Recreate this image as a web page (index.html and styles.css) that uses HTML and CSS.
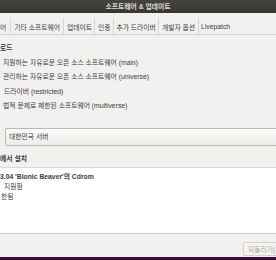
FILE: index.html
```html
<!DOCTYPE html>
<html lang="ko">
<head>
<meta charset="utf-8">
<title>소프트웨어 &amp; 업데이트</title>
<link rel="stylesheet" href="styles.css">
</head>
<body>
<div class="window">
  <header class="titlebar">소프트웨어 &amp; 업데이트</header>
  <nav class="tabs">
    <span class="tab active">어</span>
    <span class="tab">기타 소프트웨어</span>
    <span class="tab">업데이트</span>
    <span class="tab">인증</span>
    <span class="tab">추가 드라이버</span>
    <span class="tab">개발자 옵션</span>
    <span class="tab">Livepatch</span>
  </nav>
  <main class="content">
    <h2 class="section">로드</h2>
    <ul class="sources">
      <li>지원하는 자유로운 오픈 소스 소프트웨어 (main)</li>
      <li>관리하는 자유로운 오픈 소스 소프트웨어 (universe)</li>
      <li class="tight">드라이버 (restricted)</li>
      <li>법적 문제로 제한된 소프트웨어 (multiverse)</li>
    </ul>
    <div class="server-row">
      <div class="combo">대한민국 서버</div>
    </div>
    <h2 class="section cd-title">에서 설치</h2>
  </main>
  <section class="cdlist">
    <div class="cd-name">3.04 'Bionic Beaver'의 Cdrom</div>
    <div class="cd-item">지원함</div>
    <div class="cd-item flush">한됨</div>
  </section>
  <footer class="actions">
    <button class="btn" disabled>되돌리기(</button>
  </footer>
  <div class="desktop"></div>
</div>
</body>
</html>
```

FILE: styles.css
```css
* { box-sizing: border-box; margin: 0; padding: 0; }

html, body {
  width: 276px;
  height: 260px;
  overflow: hidden;
}

body {
  background: #f2f1f0;
  font-family: "Liberation Sans", "Noto Sans CJK KR", sans-serif;
  font-size: 6.8px;
  color: #3c3c3c;
}

.window {
  display: flex;
  flex-direction: column;
  height: 260px;
}

.titlebar {
  height: 13px;
  background: linear-gradient(#45443f, #37362f);
  color: #dfdbd2;
  font-weight: bold;
  font-size: 6.8px;
  line-height: 13px;
  text-align: center;
}

.tabs {
  display: flex;
  align-items: stretch;
  height: 22px;
  padding-top: 5px;
  border-bottom: 1px solid #d6d3ce;
}

.tab {
  display: flex;
  align-items: center;
  padding: 1px 2.5px 0;
  border-right: 1px solid #dad7d2;
  height: 16px;
  white-space: nowrap;
}

.tab.active {
  padding-left: 0;
  padding-right: 4px;
}

.tab:nth-child(2) { padding-left: 3px; padding-right: 3.5px; }

.tab:last-child { border-right: none; }

.content {
  padding-top: 8px;
}

.section {
  font-size: 6.8px;
  font-weight: bold;
  line-height: 10px;
  height: 10px;
}

.sources {
  list-style: none;
  padding-top: 3px;
}

.sources li {
  height: 14.4px;
  line-height: 14.4px;
  padding-left: 3px;
  white-space: nowrap;
}

.sources li.tight { padding-left: 4px; }

.server-row {
  padding: 14px 0 0 5px;
}

.combo {
  height: 18px;
  line-height: 16px;
  padding-left: 3px;
  border: 1px solid #bcb9b3;
  border-right: none;
  border-radius: 2px 0 0 2px;
  background: linear-gradient(#fbfbfa, #eeedeb);
}

.cd-title {
  margin-top: 8px;
}

.cdlist {
  margin-top: 3px;
  height: 67px;
  background: #ffffff;
  border-top: 1px solid #dcd9d4;
  border-bottom: 1px solid #cfccc6;
  padding-top: 4px;
}

.cd-name {
  font-weight: bold;
  line-height: 10px;
  white-space: nowrap;
}

.cd-item {
  line-height: 10px;
  padding-left: 4px;
}

.cd-item.flush { padding-left: 1px; }

.actions {
  flex: 1;
  display: flex;
  justify-content: flex-end;
  align-items: flex-start;
  padding-top: 8px;
}

.btn {
  width: 36px;
  height: 14px;
  margin-right: -3px;
  font-family: inherit;
  font-size: 6.8px;
  color: #a9a7a2;
  text-align: left;
  padding-left: 4px;
  background: #f4f3f2;
  border: 1px solid #d4d1cc;
  border-radius: 2px;
}

.desktop {
  height: 3px;
  background: #3b1030;
}
```
